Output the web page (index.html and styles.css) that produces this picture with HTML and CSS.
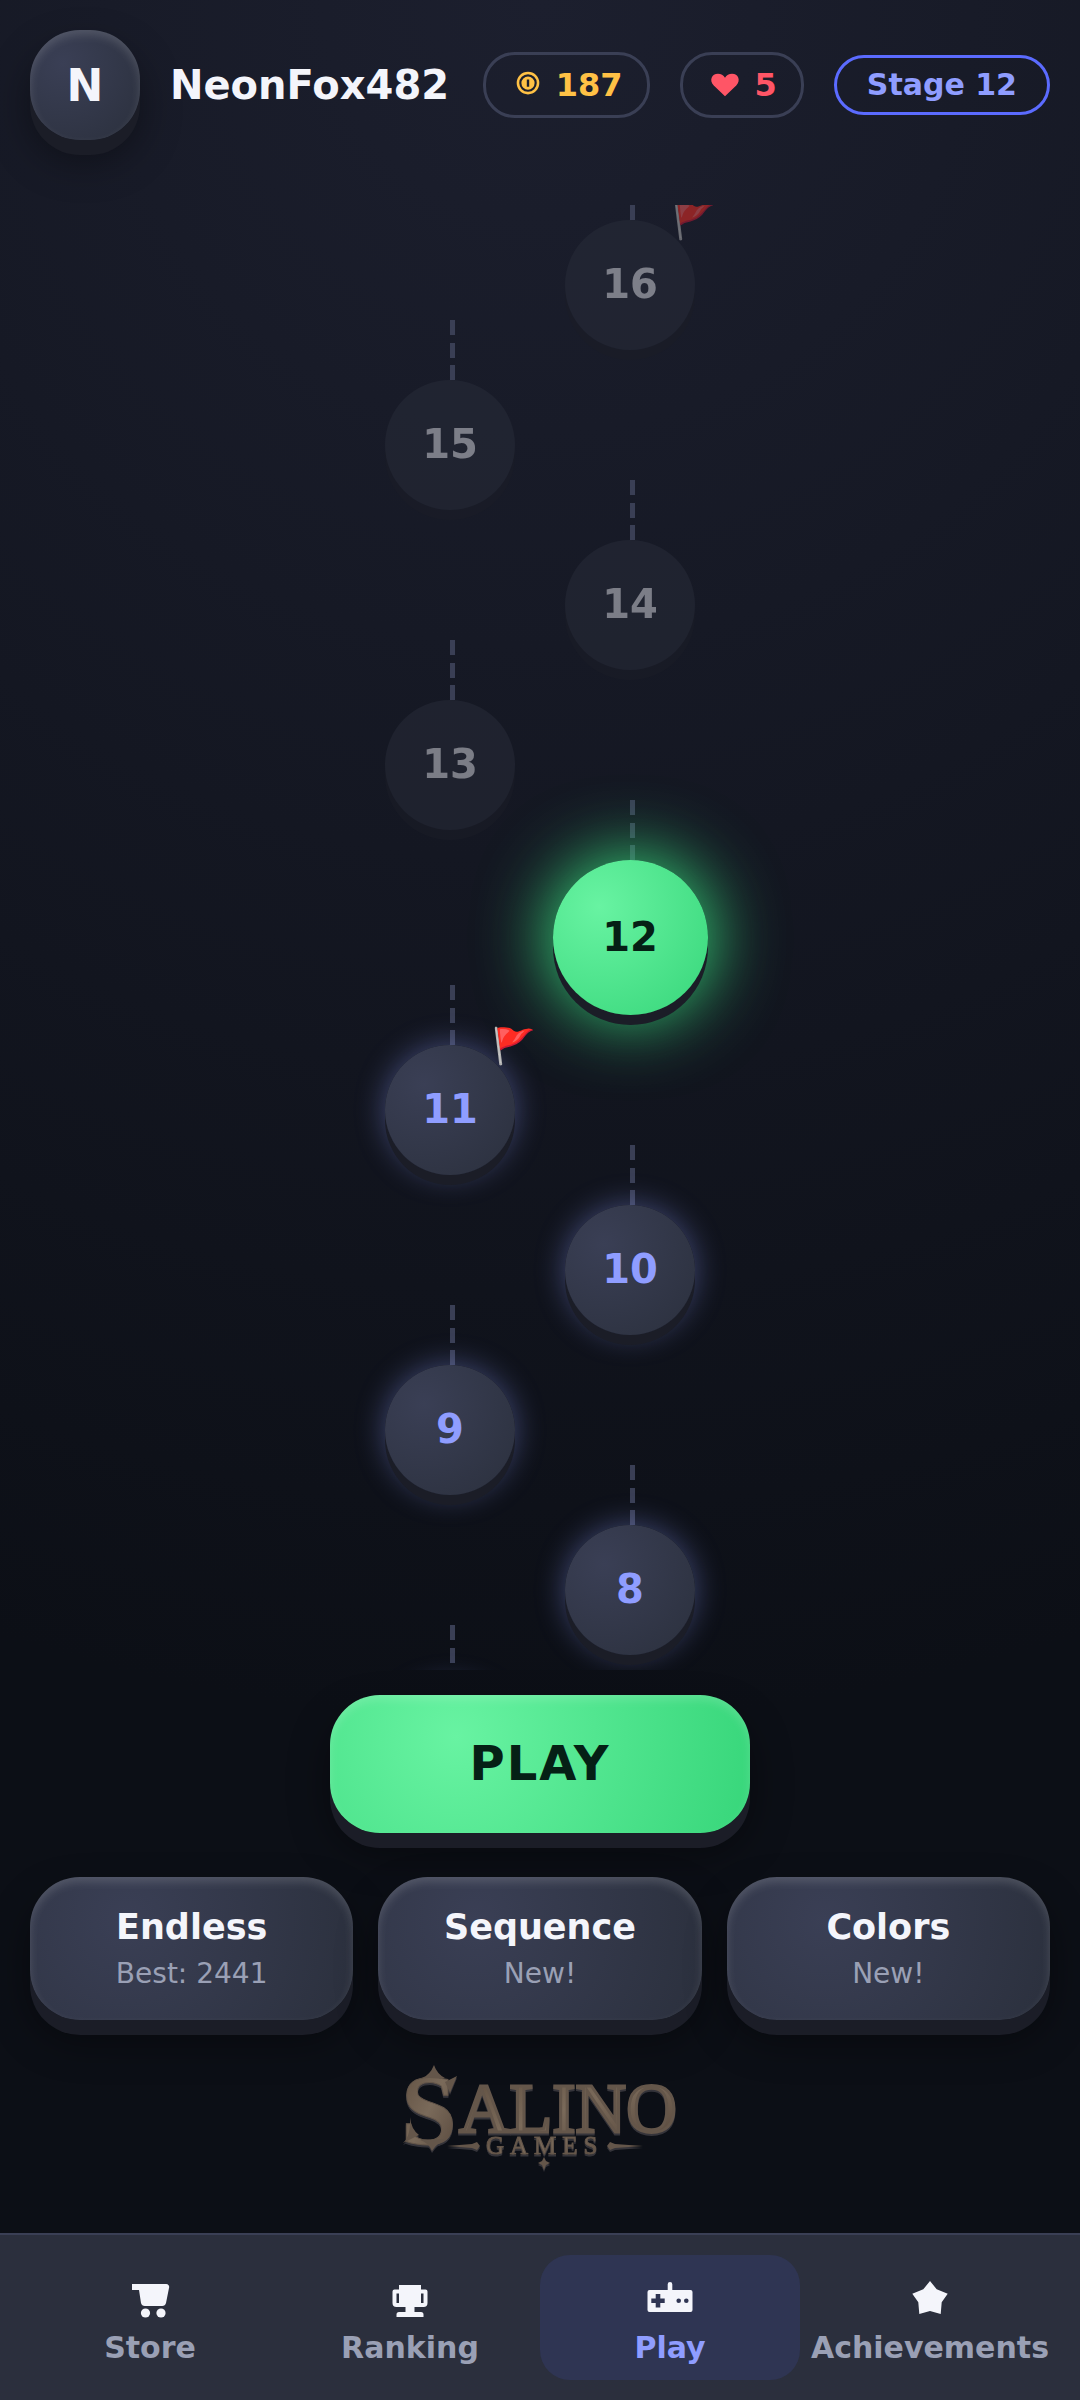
FILE: index.html
```html
<!DOCTYPE html>
<html lang="en">

<head>
  <meta charset="UTF-8">
  <meta name="viewport" content="width=device-width, initial-scale=1.0">
  <title>Play | Salino Games</title>
  <link rel="stylesheet" href="styles.css">
</head>

<body>

  <header class="topbar">
    <button type="button" class="avatar raised">N</button>
    <h1 class="player-name">NeonFox482</h1>
    <div class="pill coins">
      <svg viewBox="0 0 24 24" aria-hidden="true">
        <circle cx="12" cy="10.700" r="6.700" fill="none" stroke="currentColor" stroke-width="1.700"/>
        <path fill="currentColor" fill-rule="evenodd" d="M12 6.300a4.400 4.400 0 1 0 0 8.800 4.400 4.400 0 0 0 0-8.800zM11.200 8.300h1.600v4.800h-1.600z"/>
      </svg>
      <span>187</span>
    </div>
    <div class="pill lives">
      <svg viewBox="0 0 24 24" aria-hidden="true">
        <path fill="currentColor" d="M12 19.500 4.500 12.300C1.200 8.800 3.200 4.500 7.300 4.500c2 0 3.700 1 4.700 2.600 1-1.600 2.700-2.600 4.700-2.600 4.100 0 6.100 4.300 2.800 7.800z"/>
      </svg>
      <span>5</span>
    </div>
    <div class="pill stage-pill">Stage 12</div>
  </header>

  <main class="map">
    <div class="stage right locked"><button type="button" class="node" disabled>16<span class="flag">🚩</span></button></div>
    <div class="stage left locked"><button type="button" class="node" disabled>15</button></div>
    <div class="stage right locked"><button type="button" class="node" disabled>14</button></div>
    <div class="stage left locked"><button type="button" class="node" disabled>13</button></div>
    <div class="stage right current"><button type="button" class="node">12</button></div>
    <div class="stage left done"><button type="button" class="node">11<span class="flag">🚩</span></button></div>
    <div class="stage right done"><button type="button" class="node">10</button></div>
    <div class="stage left done"><button type="button" class="node">9</button></div>
    <div class="stage right done"><button type="button" class="node">8</button></div>
    <div class="stage left done"><button type="button" class="node">7</button></div>
  </main>

  <section class="actions">
    <button type="button" class="play-btn raised">PLAY</button>
    <div class="modes">
      <button type="button" class="mode raised"><strong>Endless</strong><small>Best: 2441</small></button>
      <button type="button" class="mode raised"><strong>Sequence</strong><small>New!</small></button>
      <button type="button" class="mode raised"><strong>Colors</strong><small>New!</small></button>
    </div>
  </section>

  <footer class="brand">
    <svg class="logo" viewBox="0 0 280 112" role="img" aria-label="Salino Games">
      <defs>
        <linearGradient id="bronze" x1="0" y1="0" x2="1" y2="1">
          <stop offset="0" stop-color="#5c4c3e"/>
          <stop offset="0.5" stop-color="#7a6a5a"/>
          <stop offset="1" stop-color="#54453a"/>
        </linearGradient>
      </defs>
      <g class="logo-letters">
        <text class="logo-cap" x="1" y="81">S</text>
        <text class="logo-word" x="59" y="70">ALINO</text>
        <text class="logo-sub" x="86" y="92">GAMES</text>
      </g>
      <g class="logo-ornament">
        <path d="M22 16q8-3 12-13 3 9 11 13zM45 20l12-6-7 17zM10 55q1 12 9 18L3 81q8-7 7-26zM20 78q9 3 12 11 5-8 14-12z"/>
        <path d="M47 84l25-2 5-2 3 4-3 4-5-2zM243 84l-28-2-5-2-3 4 3 4 5-2z"/>
        <path d="M144 95l2 4 4 2-4 2-2 5-2-5-4-2 4-2z"/>
      </g>
    </svg>
  </footer>

  <nav class="tabs">
    <a href="#store" class="tab">
      <svg viewBox="0 0 54 54" aria-hidden="true">
        <path fill="currentColor" d="M9 9h34a3 3 0 0 1 3 4l-3 15a4 4 0 0 1-4 3H22a4 4 0 0 1-4-3l-2-13H9z"/>
        <circle cx="22.500" cy="38" r="4.600" fill="currentColor"/>
        <circle cx="38" cy="38" r="4.600" fill="currentColor"/>
      </svg>
      <span>Store</span>
    </a>
    <a href="#ranking" class="tab">
      <svg viewBox="0 0 54 54" aria-hidden="true">
        <path fill="currentColor" fill-rule="evenodd" d="M16 10h22v4.500h4.500a2 2 0 0 1 2 2V28a4 4 0 0 1-4 4h-9v5H38a2.500 2.500 0 0 1 2.500 2.500V42h-27v-2.500A2.500 2.500 0 0 1 16 37h6.500v-5h-9a4 4 0 0 1-4-4V16.500a2 2 0 0 1 2-2H16zM13.500 18.500v9.500h2.500v-9.500zM38 18.500v9.500h2.500v-9.500z"/>
      </svg>
      <span>Ranking</span>
    </a>
    <a href="#play" class="tab active">
      <svg viewBox="0 0 54 54" aria-hidden="true">
        <path fill="currentColor" fill-rule="evenodd" d="M24.700 15V9.300a2.300 2.300 0 0 1 4.600 0V15H47.500a2 2 0 0 1 2 2v18a2 2 0 0 1-2 2h-41a2 2 0 0 1-2-2V17a2 2 0 0 1 2-2zM12.700 19v4.400H8.300V28h4.400v4.400h4.600V28h4.400v-4.600h-4.400V19zM35.700 23.400a2.300 2.300 0 1 0 0 4.600 2.300 2.300 0 0 0 0-4.600zM43.300 23.400a2.300 2.300 0 1 0 0 4.600 2.300 2.300 0 0 0 0-4.600z"/>
      </svg>
      <span>Play</span>
    </a>
    <a href="#achievements" class="tab">
      <svg viewBox="0 0 54 54" aria-hidden="true">
        <path fill="currentColor" d="M27 6l6.700 8.300 11 4.400-6 8.600-1 11.700L27 36l-10.700 3-1-11.700-6-8.600 11-4.400z"/>
      </svg>
      <span>Achievements</span>
    </a>
  </nav>

</body>

</html>
```
FILE: styles.css
```css
* {
  box-sizing: border-box;
  margin: 0;
  padding: 0;
}

body {
  display: flex;
  flex-direction: column;
  height: 100vh;
  background: radial-gradient(circle at 50% 0%, #1c1f2e 0%, #0c0f16 70%);
  color: #f4f5fb;
  font-family: 'DejaVu Sans', sans-serif;
}

button {
  border: none;
  color: inherit;
  font-family: inherit;
  font-weight: 700;
  cursor: pointer;
}

.raised {
  background: radial-gradient(circle at 30% 30%, #3a3f55, #2b303d);
  border-radius: 50px;
  box-shadow: 0 15px 0 #1b1d27, 0 20px 40px rgba(0, 0, 0, 0.4), inset 0 5px 10px rgba(255, 255, 255, 0.15);
}

/* top bar */
.topbar {
  display: flex;
  align-items: center;
  gap: 30px;
  padding: 30px;
  height: 170px;
}

.avatar {
  flex: none;
  width: 110px;
  height: 110px;
  font-size: 44px;
}

.player-name {
  flex: 1;
  min-width: 0;
  font-size: 40px;
  line-height: 50px;
}

.pill {
  display: flex;
  flex: none;
  align-items: center;
  gap: 10px;
  padding: 11px 24px;
  border: 3px solid #3a3f55;
  border-radius: 32px;
  font-size: 32px;
  line-height: 38px;
  font-weight: 700;
  white-space: nowrap;
}

.pill svg {
  width: 36px;
  height: 36px;
}

.coins {
  color: #ffc145;
}

.lives {
  gap: 12px;
  color: #ff5566;
}

.stage-pill {
  padding: 9px 30px;
  border-color: #5b6bff;
  color: #8f9dff;
  font-size: 30px;
  line-height: 36px;
}

/* stage map */
.map {
  flex: 1;
  display: flex;
  flex-direction: column;
  align-items: center;
  gap: 30px;
  min-height: 0;
  margin-top: 35px;
  padding-top: 15px;
  overflow: hidden;
}

.stage {
  position: relative;
  flex: none;
}

.stage::before {
  content: "";
  position: absolute;
  top: -60px;
  left: 50%;
  width: 5px;
  height: 60px;
  background:
    linear-gradient(#3a3f55, #3a3f55) top / 5px 15px no-repeat,
    linear-gradient(#3a3f55, #3a3f55) center / 5px 15px no-repeat,
    linear-gradient(#3a3f55, #3a3f55) bottom / 5px 15px no-repeat;
}

.left {
  margin-right: 180px;
}

.right {
  margin-left: 180px;
}

.node {
  position: relative;
  display: block;
  width: 130px;
  height: 130px;
  padding-bottom: 2px;
  border-radius: 50%;
  background: radial-gradient(circle at 30% 30%, #3a3f55, #2b303d);
  font-size: 40px;
}

.done .node {
  color: #8f9dff;
  box-shadow: 0 10px 0 #1b1d27, 0 0 30px rgba(143, 157, 255, 0.4);
}

.current .node {
  width: 155px;
  height: 155px;
  background: radial-gradient(circle at 30% 30%, #68f3a2, #37d67a);
  color: #052015;
  box-shadow: 0 10px 0 #1b1d27, 0 0 70px 5px #37d67a;
}

.locked .node {
  background: #292d3a;
  color: #e0e1e8;
  opacity: 0.5;
  box-shadow: 0 10px 0 #1b1d27;
}

.flag {
  position: absolute;
  top: -20px;
  right: -21px;
  font-size: 35px;
  font-weight: 400;
  line-height: 42px;
}

/* actions */
.actions {
  padding: 25px 30px 0;
}

.play-btn {
  display: block;
  width: 420px;
  height: 138px;
  margin: 0 auto 44px;
  padding-bottom: 2px;
  background: radial-gradient(circle at 30% 30%, #68f3a2, #37d67a);
  color: #052015;
  font-size: 48px;
  letter-spacing: 2px;
}

.modes {
  display: grid;
  grid-template-columns: repeat(3, 1fr);
  gap: 25px;
}

.mode {
  display: flex;
  flex-direction: column;
  align-items: center;
  padding: 29px 10px 27px;
}

.mode strong {
  font-size: 35px;
  line-height: 42px;
}

.mode small {
  margin-top: 7px;
  color: #9aa0b5;
  font-size: 28px;
  font-weight: 400;
  line-height: 38px;
}

/* studio logo */
.brand {
  display: flex;
  justify-content: center;
  padding: 42px 0 59px;
}

.logo {
  width: 280px;
  height: 112px;
  overflow: visible;
  filter: drop-shadow(0 2px 0 #35343a);
}

.logo-letters {
  fill: url(#bronze);
  stroke: #64564a;
  font-family: 'Liberation Serif', serif;
}

.logo-cap {
  font-size: 100px;
  font-weight: 700;
}

.logo-word {
  font-size: 70px;
  stroke-width: 3px;
}

.logo-sub {
  font-size: 25px;
  letter-spacing: 6px;
}

.logo-ornament {
  fill: #64564a;
}

/* bottom tabs */
.tabs {
  display: grid;
  grid-template-columns: repeat(4, 1fr);
  padding: 20px;
  background: #2b2f3d;
  border-top: 2px solid #3a3f55;
}

.tab {
  display: flex;
  flex-direction: column;
  align-items: center;
  height: 125px;
  padding-top: 20px;
  border-radius: 30px;
  color: #9aa0b5;
  font-size: 30px;
  font-weight: 700;
  line-height: 38px;
  text-decoration: none;
}

.tab svg {
  width: 54px;
  height: 54px;
  color: #f4f5fb;
}

.tab.active {
  background: #2f3553;
  color: #8f9dff;
}
```
